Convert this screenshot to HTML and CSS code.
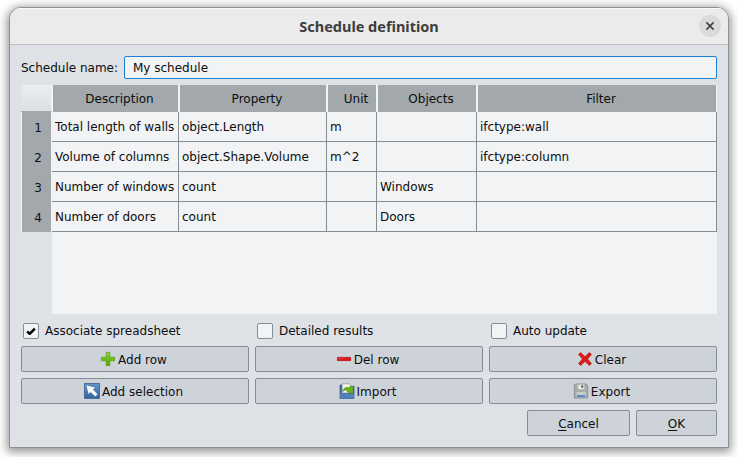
FILE: index.html
```
<!DOCTYPE html>
<html lang="en">
<head>
<meta charset="utf-8">
<title>Schedule definition</title>
<link rel="stylesheet" href="styles.css">
</head>
<body>
<div class="window">
  <header class="titlebar">
    <h1>Schedule definition</h1>
    <button class="close" aria-label="Close"><svg width="10" height="10" viewBox="0 0 10 10"><path d="M1.4 1.4 8.6 8.6M8.6 1.4 1.4 8.6" stroke="#3d3d3d" stroke-width="1.5" fill="none"/></svg></button>
  </header>
  <main class="content">
    <div class="name-row">
      <label for="name">Schedule name:</label>
      <input id="name" type="text" value="My schedule">
    </div>
    <div class="sheet">
      <div class="row head"><div class="corner"></div><div class="h">Description</div><div class="h">Property</div><div class="h">Unit</div><div class="h">Objects</div><div class="h">Filter</div></div>
      <div class="row"><div class="num">1</div><div class="c">Total length of walls</div><div class="c">object.Length</div><div class="c">m</div><div class="c"></div><div class="c">ifctype:wall</div></div>
      <div class="row"><div class="num">2</div><div class="c">Volume of columns</div><div class="c">object.Shape.Volume</div><div class="c">m^2</div><div class="c"></div><div class="c">ifctype:column</div></div>
      <div class="row"><div class="num">3</div><div class="c">Number of windows</div><div class="c">count</div><div class="c"></div><div class="c">Windows</div><div class="c"></div></div>
      <div class="row"><div class="num">4</div><div class="c">Number of doors</div><div class="c">count</div><div class="c"></div><div class="c">Doors</div><div class="c"></div></div>
      <div class="blank"></div>
    </div>
    <div class="grid checks">
      <div class="check"><span class="box"><svg width="10" height="9" viewBox="0 0 10 9"><path d="M1.2 4.4 3.7 6.8 8.8 1.6" stroke="#000" stroke-width="2.5" fill="none" stroke-linejoin="round"/></svg></span>Associate spreadsheet</div>
      <div class="check"><span class="box"></span>Detailed results</div>
      <div class="check"><span class="box"></span>Auto update</div>
    </div>
    <div class="grid buttons">
      <button class="btn"><svg width="16" height="16" viewBox="0 0 16 16"><defs><linearGradient id="g" x2="0" y2="1"><stop offset="0" stop-color="#8bdc2c"/><stop offset="1" stop-color="#4ca005"/></linearGradient></defs><path d="M6.200 1.400h3.600v4.800h4.800v3.600H9.800v4.800H6.200V9.800H1.400V6.200h4.800z" fill="url(#g)" stroke="#59a51b" stroke-width=".8"/></svg><span>Add row</span></button>
      <button class="btn"><svg width="16" height="16" viewBox="0 0 16 16"><path d="M1.400 6.400h13.200v3.200H1.400z" fill="#d31717" stroke="#b51414" stroke-width=".8"/><path d="M2 7h12L2 8.500z" fill="#ee3838"/></svg><span>Del row</span></button>
      <button class="btn"><svg width="16" height="16" viewBox="0 0 16 16"><path d="M3.600 1.600 8 5.700l4.400-4.100 2 2L10.500 8l3.900 4.400-2 2L8 10.300l-4.400 4.100-2-2L5.500 8 1.600 3.600z" fill="#de1b1b" stroke="#b51616" stroke-width=".8" stroke-linejoin="round"/></svg><span>Clear</span></button>
      <button class="btn"><svg width="16" height="16" viewBox="0 0 16 16"><defs><linearGradient id="b" x2="0" y2="1"><stop offset="0" stop-color="#6593c8"/><stop offset="1" stop-color="#3465a4"/></linearGradient></defs><path d="M.5.500h15v15H.5z" fill="url(#b)" stroke="#4a6c98"/><path d="M2.500 2.500 11 4.500 9 6.500l4.500 4.800-2.200 2.200L6.500 9l-2 2z" fill="#f8f7f3"/></svg><span>Add selection</span></button>
      <button class="btn"><svg width="16" height="16" viewBox="0 0 16 16"><path d="M1 2h2v8h11V3h1v12.500H1z" fill="#416fa9" stroke="#365f91" stroke-width=".8"/><path d="M3.200.800h7.500L13.800 4v6H3.200z" fill="#f1f3ee" stroke="#8b9390" stroke-width=".7"/><path d="M4 8.500C4.500 4.800 7.500 3.800 9.500 4.800L11.500 3l2.300 1v6H10.500L7.500 8l1-1C6.500 6.500 5 7 4 8.500z" fill="#69b51a" stroke="#4b8f10" stroke-width=".7"/><path d="M1 10h5l1 1h8v4.500H1z" fill="#527fb8"/></svg><span>Import</span></button>
      <button class="btn"><svg width="16" height="16" viewBox="0 0 16 16"><path d="M2.300 1h10.700l1.700 2v12H1.300V2z" fill="#a9aea8" stroke="#858b87" stroke-width=".9"/><path d="M4.300 1.300h7.200v5H4.300z" fill="#c6cbc8"/><path d="M5.700 2.200h4.800V6H5.700z" fill="#efefec"/><path d="M8.200 2.500h1.900v2.200H8.200z" fill="#4d5358"/><path d="M3.500 9h9v5.500h-9z" fill="#c9ccc9"/><path d="M4 12h8v2.300H4z" fill="#608bc0"/></svg><span>Export</span></button>
    </div>
    <div class="actions">
      <button class="btn cancel"><span><u>C</u>ancel</span></button>
      <button class="btn ok"><span><u>O</u>K</span></button>
    </div>
  </main>
</div>
</body>
</html>
```
FILE: styles.css
```
* { box-sizing: border-box; }
body {
  margin: 0;
  height: 457px;
  overflow: hidden;
  padding: 7px 9px 9px;
  background: #fff;
  font: 12px/16px "DejaVu Sans", sans-serif;
  color: #0c0e10;
}
.window {
  height: 441px;
  border: 1px solid #8f9091;
  border-radius: 12px 12px 0 0;
  background: #dee1e6;
  box-shadow: 0 2px 10px 2px rgba(0, 0, 0, .42);
  overflow: hidden;
}
.titlebar {
  display: grid;
  grid-template-columns: 22px 1fr 22px;
  align-items: center;
  height: 37px;
  padding: 0 7px;
  background: #ebebeb;
  border-top: 1px solid #fafafa;
  border-bottom: 1px solid #bfbfbf;
}
h1 {
  grid-column: 2;
  margin: 0;
  padding-bottom: 2px;
  text-align: center;
  font: bold 14.5px/20px "Noto Sans", sans-serif;
  color: #3d3d3d;
}
.close {
  width: 22px;
  height: 22px;
  margin-top: -2px;
  padding: 0;
  border: 0;
  border-radius: 50%;
  background: #dadada;
  display: grid;
  place-items: center;
}
.content { padding: 11px 11px 0; }
.name-row { display: flex; align-items: center; height: 23px; }
.name-row label { width: 103px; }
.name-row input {
  flex: 1;
  height: 23px;
  padding: 0 8px;
  border: 1px solid #1a7fd8;
  border-radius: 2px;
  background: #f1f3f5;
  font: inherit;
  color: inherit;
  outline: 0;
}
.sheet { display: flex; flex-direction: column; height: 229px; margin-top: 6px; }
.row { display: grid; grid-template-columns: 31px 127px 148px 50px 100px 240px; height: 30px; flex: none; }
.head { height: 27px; }
.corner {
  background: linear-gradient(#ebeef1, #dcdfe3);
  border-right: 1px solid #f1f3f5;
  border-bottom: 1px solid #a3a8ac;
}
.h {
  background: #a3a8ac;
  border-left: 1px solid #f1f3f5;
  border-right: 1px solid #f1f3f5;
  padding: 6px 0 0 8px;
  text-align: center;
}
.num {
  background: #a3a8ac;
  border-left: 1px solid #f1f3f5;
  border-right: 1px solid #f1f3f5;
  padding: 8px 0 0 3px;
  text-align: center;
}
.c {
  background: #f1f3f5;
  border-right: 1px solid #848e96;
  border-bottom: 1px solid #848e96;
  padding: 7px 0 0 3px;
  white-space: nowrap;
}
.blank { flex: 1; margin-left: 31px; background: #f1f3f5; }
.grid { display: grid; grid-template-columns: repeat(3, 228px); gap: 6px; }
.checks { margin-top: 9px; height: 16px; }
.check { display: flex; align-items: center; gap: 6px; padding-left: 2px; }
.box {
  width: 16px;
  height: 16px;
  border: 1px solid #848e96;
  border-radius: 2px;
  background: #f1f3f5;
  display: grid;
  place-items: center;
}
.buttons { margin-top: 7px; }
.btn {
  display: flex;
  align-items: center;
  justify-content: center;
  gap: 2px;
  height: 26px;
  padding: 0;
  border: 1px solid #848e96;
  border-radius: 2px;
  background: #ced3da;
  font: inherit;
  color: inherit;
}
.btn span { padding-top: 2px; }
.buttons .btn { padding-right: 3px; }
.actions { display: flex; justify-content: flex-end; gap: 6px; margin-top: 6px; }
.cancel { width: 103px; }
.ok { width: 81px; }
u { text-underline-offset: 2px; }
```
